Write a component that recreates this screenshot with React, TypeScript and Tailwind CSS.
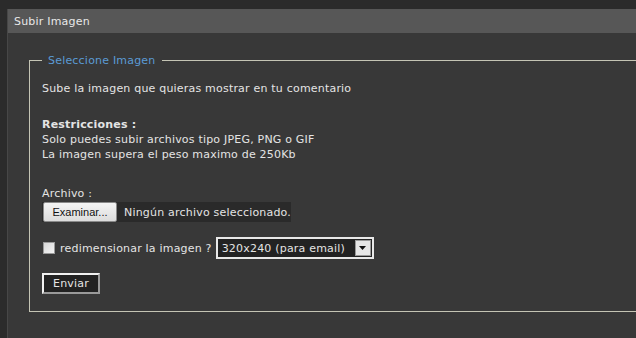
const font = { fontFamily: '"DejaVu Sans", Verdana, sans-serif' };

const App = () => {
  return (
    <div
      className="w-[636px] h-[338px] overflow-hidden bg-[#2b2b2b] pt-[9px] pl-[7px] text-[11px] leading-[15px] tracking-[0.2px] text-[#e4e4e4]"
      style={font}
    >
      <div className="h-[340px] w-[640px] border-l border-[#474747] bg-[#383838]">
        <div className="flex h-[24px] items-center bg-[#575757] px-[6px] text-[11px] text-[#e8e8e8]">
          Subir Imagen
        </div>
        <div className="pl-[21px] pt-[20px]">
          <fieldset className="w-[640px] border border-[#c4c4b4] pb-[17px] pl-[12px]">
            <legend className="px-[6px] text-[#5b9bd5]">Seleccione Imagen</legend>
            <p className="mt-[13px]">Sube la imagen que quieras mostrar en tu comentario</p>
            <p className="mt-[21px] font-bold">Restricciones :</p>
            <p>Solo puedes subir archivos tipo JPEG, PNG o GIF</p>
            <p>La imagen supera el peso maximo de 250Kb</p>

            <p className="mt-[24px]">Archivo :</p>
            <div className="mt-[1px] flex h-[20px] w-[249px] items-center whitespace-nowrap bg-[#2a2a2a]">
              <button className="ml-[1px] h-[20px] w-[74px] shrink-0 rounded-[2px] border border-[#8a8a8a] bg-gradient-to-b from-[#f4f4f4] to-[#dcdcdc] font-['Liberation_Sans',Arial,sans-serif] text-[11px] tracking-normal text-[#111]">
                Examinar...
              </button>
              <span className="ml-[7px]">Ningún archivo seleccionado.</span>
            </div>

            <div className="mt-[15px] flex items-center whitespace-nowrap">
              <span className="ml-[1px] h-[12px] w-[12px] border border-[#9a9a9a] bg-gradient-to-br from-[#d8d8d8] to-[#f4f4f4]" />
              <span className="ml-[5px]">redimensionar la imagen ?</span>
              <div className="ml-[4px] flex h-[22px] w-[158px] items-center border-2 border-[#e8e8e8] bg-[#222]">
                <span className="flex-1 pl-[4px]">320x240 (para email)</span>
                <span className="mr-[1px] flex h-[16px] w-[16px] items-center justify-center border border-[#999] bg-[#e6e6e6]">
                  <svg width="7" height="4" viewBox="0 0 7 4">
                    <path d="M0 0h7L3.5 4z" fill="#111" />
                  </svg>
                </span>
              </div>
            </div>

            <button className="mt-[14px] h-[21px] w-[58px] border-2 border-t-[#f0f0f0] border-l-[#f0f0f0] border-r-[#9a9a9a] border-b-[#9a9a9a] bg-[#222] text-[11px] text-[#e4e4e4]">
              Enviar
            </button>
          </fieldset>
        </div>
      </div>
    </div>
  );
};

export default App;
